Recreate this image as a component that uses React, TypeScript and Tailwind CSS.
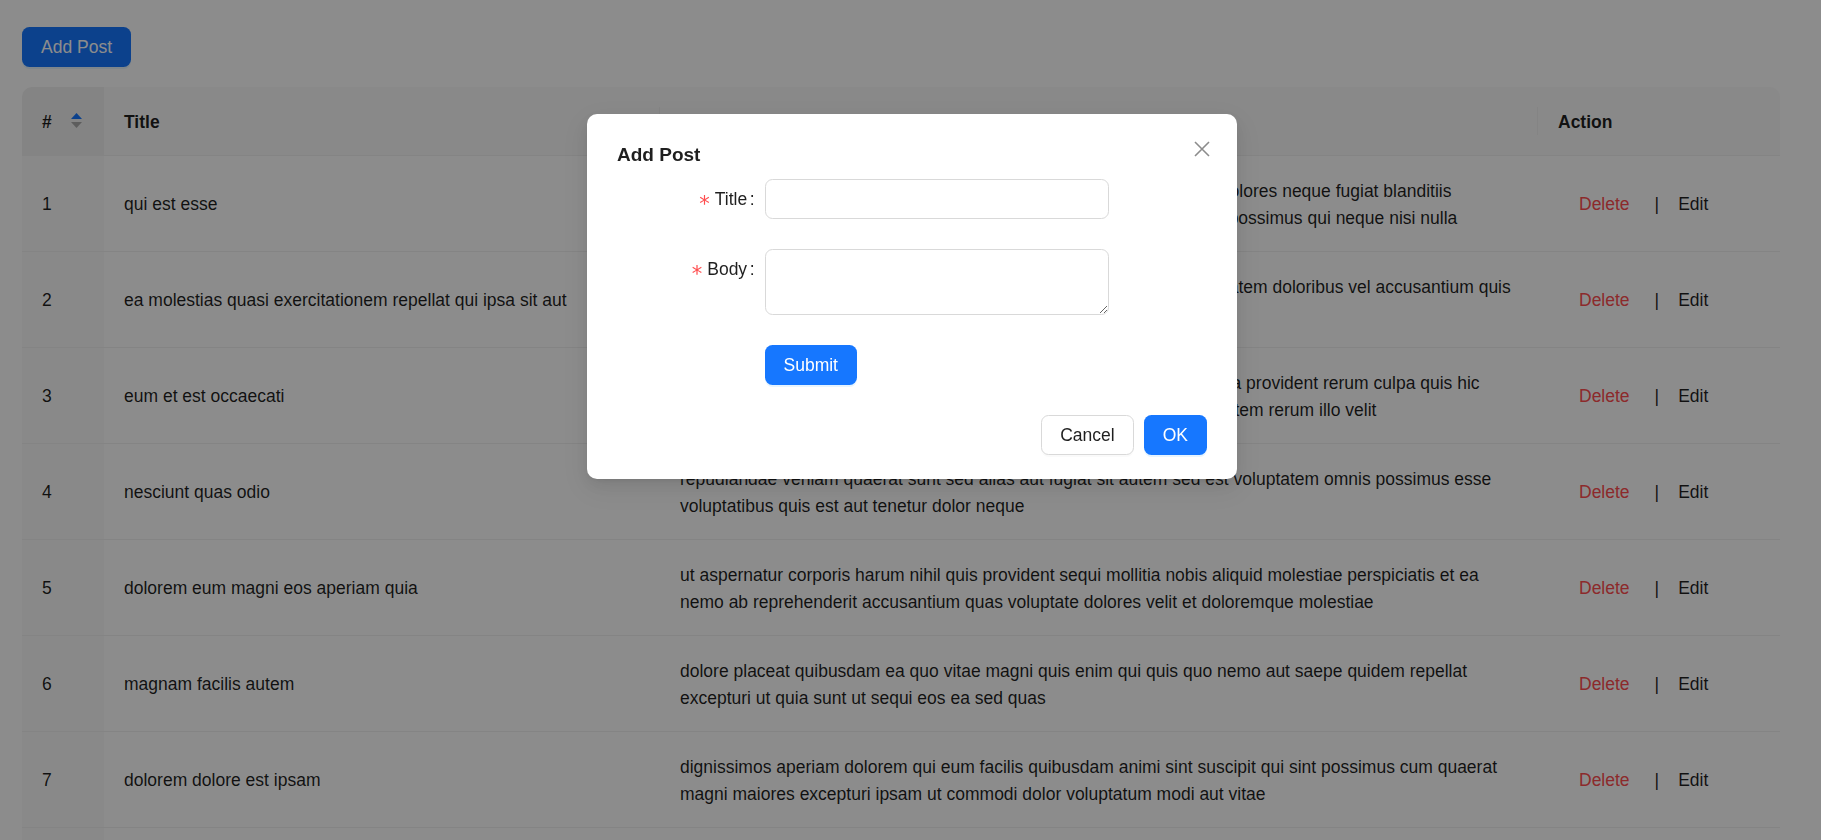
import React from 'react';

interface Post {
  id: number;
  title: string;
  body: string;
}

const posts: Post[] = [
  {
    id: 1,
    title: 'qui est esse',
    body: 'est rerum tempore vitae sequi sint nihil reprehenderit dolor beatae ea dolores neque fugiat blanditiis voluptate porro vel nihil molestiae ut reiciendis qui aperiam non debitis possimus qui neque nisi nulla',
  },
  {
    id: 2,
    title: 'ea molestias quasi exercitationem repellat qui ipsa sit aut',
    body: 'et iusto sed quo iure voluptatem occaecati omnis eligendi aut ad voluptatem doloribus vel accusantium quis pariatur molestiae porro eius odio et labore et velit aut',
  },
  {
    id: 3,
    title: 'eum et est occaecati',
    body: 'ullam et saepe reiciendis voluptatem adipisci sit amet autem assumenda provident rerum culpa quis hic commodi nesciunt rem tenetur doloremque ipsam iure quis sunt voluptatem rerum illo velit',
  },
  {
    id: 4,
    title: 'nesciunt quas odio',
    body: 'repudiandae veniam quaerat sunt sed alias aut fugiat sit autem sed est voluptatem omnis possimus esse voluptatibus quis est aut tenetur dolor neque',
  },
  {
    id: 5,
    title: 'dolorem eum magni eos aperiam quia',
    body: 'ut aspernatur corporis harum nihil quis provident sequi mollitia nobis aliquid molestiae perspiciatis et ea nemo ab reprehenderit accusantium quas voluptate dolores velit et doloremque molestiae',
  },
  {
    id: 6,
    title: 'magnam facilis autem',
    body: 'dolore placeat quibusdam ea quo vitae magni quis enim qui quis quo nemo aut saepe quidem repellat excepturi ut quia sunt ut sequi eos ea sed quas',
  },
  {
    id: 7,
    title: 'dolorem dolore est ipsam',
    body: 'dignissimos aperiam dolorem qui eum facilis quibusdam animi sint suscipit qui sint possimus cum quaerat magni maiores excepturi ipsam ut commodi dolor voluptatum modi aut vitae',
  },
  {
    id: 8,
    title: 'nesciunt iure omnis dolorem tempora et accusantium',
    body: 'consectetur animi nesciunt iure dolore enim quia ad veniam autem ut quam aut nobis et est aut quod aut provident voluptas autem voluptas',
  },
];

const HeaderSep = () => (
  <span className="absolute right-0 top-1/2 h-[28px] w-px -translate-y-1/2 bg-[#f0f0f0]" />
);

const SortIcon = () => (
  <svg width="11" height="15" viewBox="0 0 11 15" className="mr-[2px] -translate-y-[2px]">
    <path d="M0 6 L5.5 0 L11 6 Z" fill="#1677ff" />
    <path d="M0 9 L11 9 L5.5 15 Z" fill="rgba(0,0,0,0.29)" />
  </svg>
);

const FormRow: React.FC<{ label: string; children: React.ReactNode }> = ({ label, children }) => (
  <div className="mb-[30px] flex">
    <label className="flex h-10 w-[147.5px] shrink-0 items-center justify-end pt-[2px]">
      <span className="mr-[5px] translate-y-[4px] font-['DejaVu_Sans',sans-serif] text-[21px] leading-none text-[#ff4d4f]">*</span>
      <span>{label}</span>
      <span className="ml-[2.5px] mr-[10px]">:</span>
    </label>
    <div className="w-[344px]">{children}</div>
  </div>
);

const primaryBtn =
  'h-10 rounded-[7.5px] bg-[#1677ff] px-[19px] pt-[2px] text-white shadow-[0_2px_0_rgba(5,145,255,0.1)]';

const AddPostModal = () => (
  <>
    <div className="fixed inset-0 bg-black/45" />
    <div className="fixed inset-0 flex justify-center pl-[3px] pt-[114px]">
      <div className="relative h-fit w-[650px] rounded-[10px] bg-white px-[30px] pb-6 pt-[25px] shadow-[0_6px_16px_0_rgba(0,0,0,0.08),0_3px_6px_-4px_rgba(0,0,0,0.12),0_9px_28px_8px_rgba(0,0,0,0.05)]">
        <button className="absolute right-[21px] top-[21px] flex h-[27.5px] w-[27.5px] items-center justify-center">
          <svg width="16" height="16" viewBox="0 0 16 16">
            <path d="M1 1 L15 15 M15 1 L1 15" stroke="rgba(0,0,0,0.45)" strokeWidth="1.6" />
          </svg>
        </button>
        <div className="mb-[10px] pt-[2px] text-[19px] font-semibold leading-[28px]">Add Post</div>
        <form>
          <FormRow label="Title">
            <input className="h-10 w-full rounded-[7.5px] border border-[#d9d9d9] bg-white px-[14px] outline-none" />
          </FormRow>
          <FormRow label="Body">
            <textarea className="block h-[66px] w-full rounded-[7.5px] border border-[#d9d9d9] bg-white px-[14px] py-[5px] outline-none" />
          </FormRow>
          <div className="mb-[30px] flex">
            <div className="w-[147.5px] shrink-0" />
            <button type="button" className={primaryBtn}>
              Submit
            </button>
          </div>
        </form>
        <div className="flex justify-end gap-[10px]">
          <button className="h-10 rounded-[7.5px] border border-[#d9d9d9] bg-white px-[18px] pt-[2px] shadow-[0_2px_0_rgba(0,0,0,0.02)]">
            Cancel
          </button>
          <button className={primaryBtn}>OK</button>
        </div>
      </div>
    </div>
  </>
);

export default function App() {
  return (
    <div className="relative h-screen overflow-hidden bg-white font-['Liberation_Sans',Arial,sans-serif] text-[17.5px] leading-[27.5px] text-[rgba(0,0,0,0.88)]">
      <div className="pl-[22px] pr-[41px] pt-[27px]">
        <button className={primaryBtn}>Add Post</button>
        <table className="mt-5 w-full table-fixed border-separate border-spacing-0 text-left">
          <thead>
            <tr>
              <th className="relative w-[82px] rounded-tl-[10px] border-b border-[#f0f0f0] bg-[#f0f0f0] px-5 pb-[18px] pt-[22px] font-semibold">
                <div className="flex items-center justify-between">
                  <span>#</span>
                  <SortIcon />
                </div>
                <HeaderSep />
              </th>
              <th className="relative w-[556px] border-b border-[#f0f0f0] bg-[#fafafa] px-5 pb-[18px] pt-[22px] font-semibold">
                Title
                <HeaderSep />
              </th>
              <th className="relative w-[878px] border-b border-[#f0f0f0] bg-[#fafafa] px-5 pb-[18px] pt-[22px] font-semibold">
                Body
                <HeaderSep />
              </th>
              <th className="rounded-tr-[10px] border-b border-[#f0f0f0] bg-[#fafafa] px-5 pb-[18px] pt-[22px] font-semibold">
                Action
              </th>
            </tr>
          </thead>
          <tbody>
            {posts.map((post, index) => (
              <tr key={post.id}>
                <td className="border-b border-[#f0f0f0] bg-[#fafafa] px-5 pb-[18px] pt-[22px]">{index + 1}</td>
                <td className="border-b border-[#f0f0f0] px-5 pb-[18px] pt-[22px]">{post.title}</td>
                <td className="border-b border-[#f0f0f0] px-5 pb-[18px] pt-[22px]">{post.body}</td>
                <td className="border-b border-[#f0f0f0] px-5 pb-[18px] pt-[22px]">
                  <div className="flex items-center">
                    <button className="pl-[21px] pr-[19px] text-[#ff4d4f]">Delete</button>
                    <span className="ml-[6px]">|</span>
                    <button className="px-[19px]">Edit</button>
                  </div>
                </td>
              </tr>
            ))}
          </tbody>
        </table>
      </div>
      <AddPostModal />
    </div>
  );
}
